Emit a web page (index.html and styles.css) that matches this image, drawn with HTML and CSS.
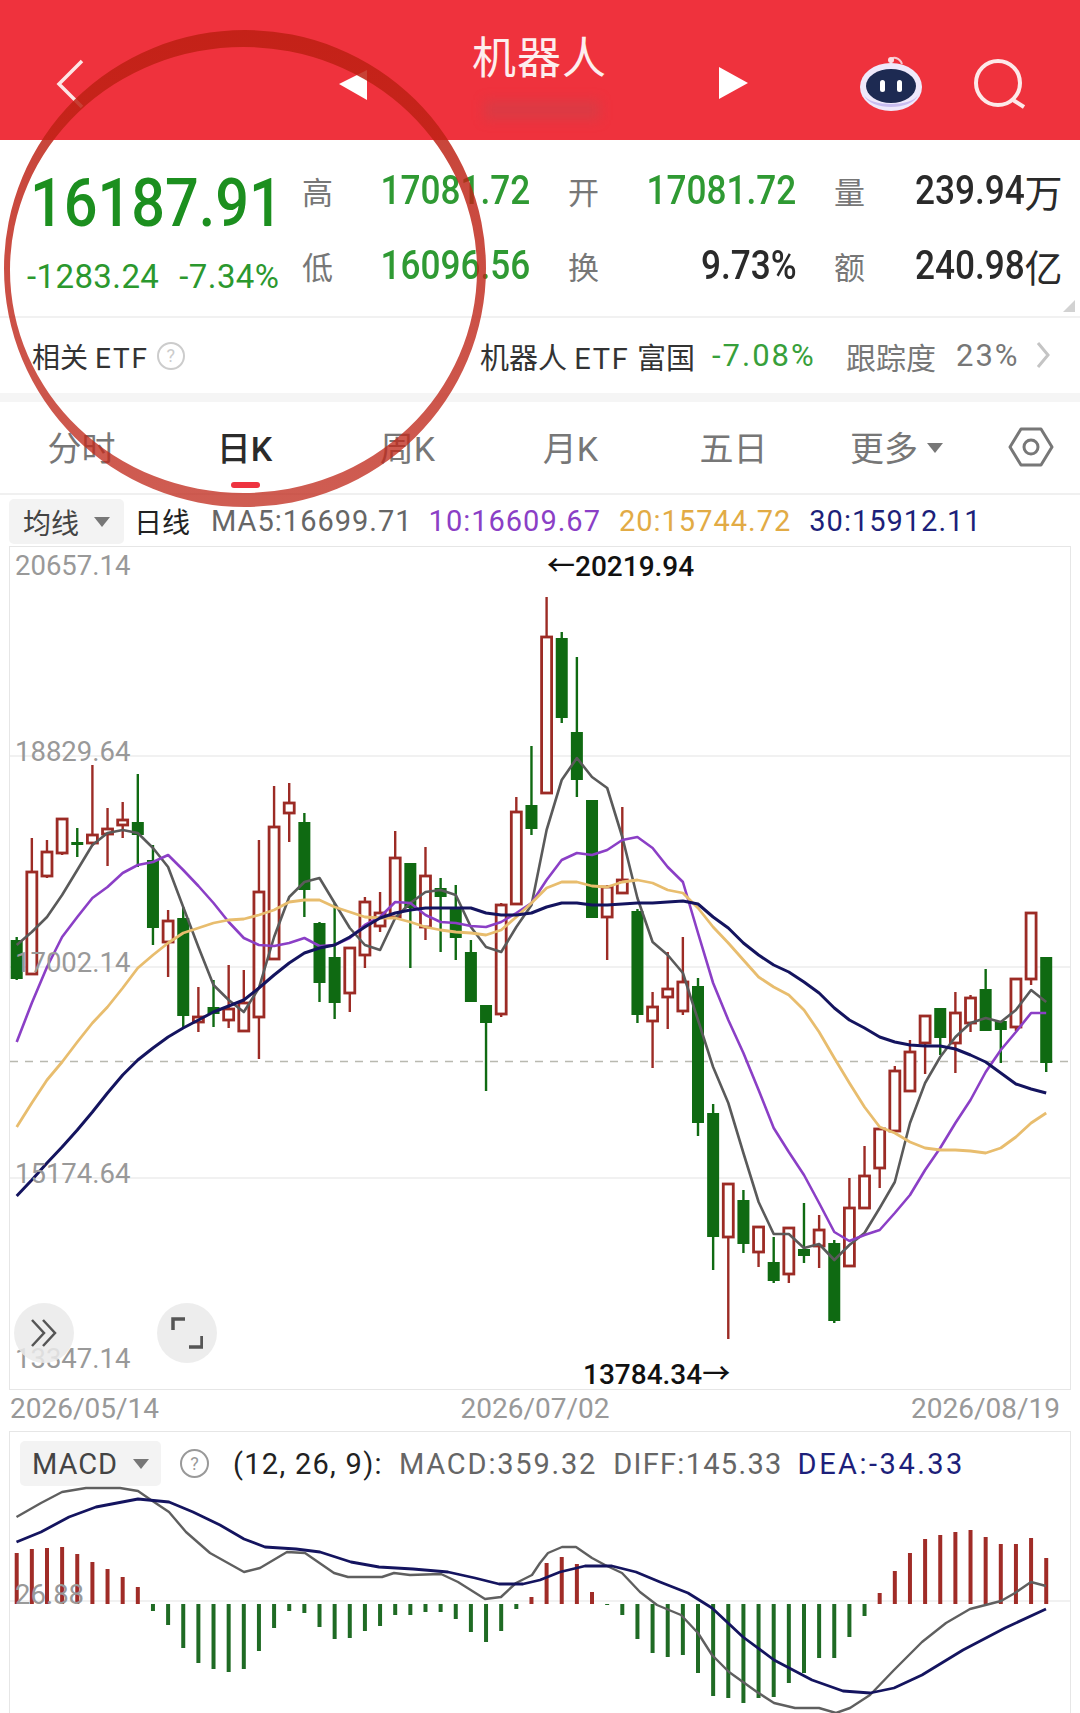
FILE: index.html
```html
<!DOCTYPE html>
<html lang="zh-CN">
<head>
    <meta charset="UTF-8">
    <meta name="viewport" content="width=device-width, initial-scale=1.0">
    <title>机器人</title>
    <link rel="stylesheet" href="styles.css">
</head>
<body>
    <header class="top-bar">
        <svg class="back-btn" width="28" height="50" viewBox="0 0 28 50"><path d="M26 2 L3 25 L26 48" fill="none" stroke="#fde6e6" stroke-width="3.5"/></svg>
        <svg class="prev-btn" width="28" height="30" viewBox="0 0 28 30"><path d="M0 14 L28 0 L28 30 Z" fill="#fff"/></svg>
        <div class="title">机器人</div>
        <svg class="next-btn" width="29" height="32" viewBox="0 0 29 32"><path d="M0 0 L29 16 L0 32 Z" fill="#fff"/></svg>
        <svg class="robot-btn" width="62" height="56" viewBox="0 0 62 56">
            <path d="M31 9 C30 4 33 2 36 3 C39 4 41 6 42 9" fill="none" stroke="#f7c8d0" stroke-width="2"/>
            <circle cx="31" cy="5" r="3" fill="#fbdde2"/>
            <ellipse cx="31" cy="32" rx="31" ry="24" fill="#efe9fb"/>
            <path d="M4 40 C10 52 52 52 58 40 C52 56 10 56 4 40 Z" fill="#c9bdf0"/>
            <ellipse cx="31" cy="31" rx="25" ry="17" fill="#1d2a52"/>
            <rect x="20" y="25" width="5" height="12" rx="2.5" fill="#fff"/>
            <rect x="37" y="25" width="5" height="12" rx="2.5" fill="#fff"/>
        </svg>
        <svg class="search-btn" width="52" height="50" viewBox="0 0 52 50"><circle cx="24" cy="24" r="22" fill="none" stroke="#fde9e9" stroke-width="4"/><path d="M39 41 L50 48" stroke="#fde9e9" stroke-width="4"/></svg>
        <div class="smudge"></div>
    </header>

    <section class="quote">
        <div class="price-col">
            <div class="price">16187.91</div>
            <div class="change"><span>-1283.24</span><span>-7.34%</span></div>
        </div>
        <div class="stats">
            <div class="stat"><span class="stat-label">高</span><span class="stat-value down"><span class="digits">17081.72</span></span></div>
            <div class="stat"><span class="stat-label">开</span><span class="stat-value down"><span class="digits">17081.72</span></span></div>
            <div class="stat"><span class="stat-label">量</span><span class="stat-value"><span class="digits">239.94</span><span class="unit">万</span></span></div>
            <div class="stat"><span class="stat-label">低</span><span class="stat-value down"><span class="digits">16096.56</span></span></div>
            <div class="stat"><span class="stat-label">换</span><span class="stat-value"><span class="digits">9.73%</span></span></div>
            <div class="stat"><span class="stat-label">额</span><span class="stat-value"><span class="digits">240.98</span><span class="unit">亿</span></span></div>
        </div>
        <div class="corner"></div>
    </section>

    <section class="etf-row">
        <span class="etf-title">相关 <b>ETF</b></span>
        <span class="help etf-help">?</span>
        <span class="etf-name">机器人 <b>ETF</b> 富国</span>
        <span class="etf-pct">-7.08%</span>
        <span class="etf-track">跟踪度</span>
        <span class="etf-track-val">23%</span>
        <svg class="etf-arrow" width="15" height="26" viewBox="0 0 15 26"><path d="M2 1 L12 13 L2 25" fill="none" stroke="#c4c4c4" stroke-width="3"/></svg>
    </section>

    <nav class="tabs">
        <div class="tab">分时</div>
        <div class="tab active">日K</div>
        <div class="tab">周K</div>
        <div class="tab">月K</div>
        <div class="tab">五日</div>
        <div class="tab">更多<i class="caret tab-caret"></i></div>
        <div class="tab">
            <svg width="46" height="40" viewBox="0 0 46 40"><path d="M13 2 L33 2 L44 20 L33 38 L13 38 L2 20 Z" fill="none" stroke="#777" stroke-width="3" stroke-linejoin="round"/><circle cx="23" cy="20" r="7" fill="none" stroke="#777" stroke-width="3"/></svg>
        </div>
    </nav>

    <div class="legend">
        <div class="picker ma-picker">均线<i class="caret"></i></div>
        <span class="legend-day">日线</span>
        <span class="ma5">MA5:16699.71</span>
        <span class="ma10">10:16609.67</span>
        <span class="ma20">20:15744.72</span>
        <span class="ma30">30:15912.11</span>
    </div>

    <div class="chart-box">
        <svg id="kline" width="1060" height="842" viewBox="10 547 1060 842"></svg>
        <span class="peak high-peak">←20219.94</span>
        <span class="peak low-peak">13784.34→</span>
        <div class="round-btn skip-btn">
            <svg width="32" height="32" viewBox="0 0 32 32"><path d="M4 3 L16 16 L4 29 M15 3 L27 16 L15 29" fill="none" stroke="#555" stroke-width="2.5"/></svg>
        </div>
        <div class="round-btn expand-btn">
            <svg width="32" height="34" viewBox="0 0 32 34"><path d="M14 3 L2 3 L2 14 M31 20 L31 31 L18 31" fill="none" stroke="#555" stroke-width="3.5"/></svg>
        </div>
    </div>

    <div class="dates">
        <span>2026/05/14</span>
        <span>2026/07/02</span>
        <span>2026/08/19</span>
    </div>

    <div class="macd-box">
        <div class="macd-head">
            <div class="picker macd-picker">MACD<i class="caret"></i></div>
            <span class="help macd-help">?</span>
            <span class="macd-params">(12, 26, 9):</span>
            <span class="macd-val">MACD:359.32</span>
            <span class="diff-val">DIFF:145.33</span>
            <span class="dea-val">DEA:-34.33</span>
        </div>
        <svg id="macd" width="1060" height="227" viewBox="10 1486 1060 227"></svg>
    </div>

    <svg class="ring" width="1080" height="540" viewBox="0 0 1080 540">
        <defs>
            <linearGradient id="ringFill" x1="0" y1="0" x2="0" y2="1">
                <stop offset="0" stop-color="#bd1f12" stop-opacity=".86"/>
                <stop offset="1" stop-color="#c02a1c" stop-opacity=".76"/>
            </linearGradient>
        </defs>
        <path fill="url(#ringFill)" fill-rule="evenodd" d="M4 268.5 A241 238.5 0 1 0 486 268.5 A241 238.5 0 1 0 4 268.5 Z M10 270 A233.5 223 0 1 0 477 270 A233.5 223 0 1 0 10 270 Z"/>
    </svg>

    <script src="chart.js"></script>
</body>
</html>
```

FILE: styles.css
```css
* { box-sizing: border-box; }
html, body { margin: 0; padding: 0; background: #fff; }
body {
    width: 1080px;
    height: 1713px;
    overflow: hidden;
    position: relative;
    display: flex;
    flex-direction: column;
    font-family: Roboto, "Noto Sans CJK SC", sans-serif;
    color: #333;
}
b { font-weight: 400; }

/* top bar */
.top-bar { position: relative; height: 140px; flex: none; background: #ef323d; display: flex; align-items: flex-start; }
.back-btn { margin: 59px 0 0 56px; }
.prev-btn { margin: 70px 0 0 255px; }
.title { margin: 23px 0 0 105px; width: 135px; font-size: 44px; line-height: 64px; color: #fdeeee; letter-spacing: 1px; white-space: nowrap; font-family: "Noto Sans CJK SC", sans-serif; }
.next-btn { margin: 67px 0 0 112px; }
.robot-btn { margin: 55px 0 0 112px; }
.search-btn { margin: 59px 0 0 52px; }
.smudge { position: absolute; left: 484px; top: 100px; width: 116px; height: 20px; background: rgba(190, 70, 80, .38); filter: blur(6px); }

/* quote block */
.quote { position: relative; height: 178px; flex: none; display: flex; border-bottom: 2px solid #f1f1f1; }
.price-col { width: 302px; flex: none; }
.price { font-size: 66px; line-height: 68px; width: 270px; white-space: nowrap; margin: 30px 0 0 30px; color: #1c8f1f; font-weight: 500; transform: scaleX(.9); transform-origin: left center; }
.change { display: flex; gap: 20px; margin: 21px 0 0 27px; font-size: 33px; line-height: 36px; color: #2b982e; white-space: nowrap; letter-spacing: .4px; }
.stats { display: grid; grid-template-columns: repeat(3, 228.5px); column-gap: 37.5px; grid-auto-rows: 75px; padding-top: 13px; }
.stat { display: flex; justify-content: space-between; align-items: center; }
.stat-label { font-family: "Noto Sans CJK SC", sans-serif; font-size: 31px; color: #777; }
.stat-value { display: flex; align-items: center; font-size: 40px; font-weight: 500; color: #2a2a2a; }
.stat-value.down { color: #2f9a33; }
.digits { display: inline-block; transform: scaleX(.88); transform-origin: right center; }
.unit { font-family: "Noto Sans CJK SC", sans-serif; font-size: 38px; font-weight: 400; }
.corner { position: absolute; left: 1063px; top: 160px; width: 12px; height: 12px; background: #d2d2d2; clip-path: polygon(100% 0, 100% 100%, 0 100%); }

/* etf row */
.etf-row { position: relative; height: 84px; flex: none; border-bottom: 9px solid #f5f5f5; display: flex; align-items: center; font-size: 28px; white-space: nowrap; }
.etf-row b { letter-spacing: 1.8px; }
.etf-title { margin-left: 32px; color: #333; }
.etf-name { position: absolute; left: 480px; color: #333; font-size: 29px; }
.etf-pct { position: absolute; left: 712px; color: #37a03b; font-size: 31px; letter-spacing: 2px; }
.etf-track { position: absolute; left: 846px; color: #777; font-family: "Noto Sans CJK SC", sans-serif; font-size: 30px; }
.etf-track-val { position: absolute; left: 956px; color: #777; font-size: 31px; letter-spacing: 2px; }
.etf-arrow { position: absolute; left: 1036px; top: 24px; }
.help { display: inline-flex; align-items: center; justify-content: center; border-radius: 50%; border: 2px solid #ccc; color: #ccc; font-size: 18px; width: 28px; height: 28px; }
.etf-help { margin-left: 8px; }

/* period tabs */
.tabs { flex: none; height: 93px; display: grid; grid-template-columns: repeat(6, 163px) 102px; align-items: center; border-bottom: 2px solid #f0f0f0; }
.tab { position: relative; text-align: center; font-size: 34px; color: #777; padding-bottom: 2px; white-space: nowrap; }
.tab svg { display: block; margin: 0 auto 0 30px; }
.tab.active { color: #2b2b2b; font-weight: 500; }
.tab.active::after { content: ""; position: absolute; left: 68px; top: 60px; width: 29px; height: 6px; border-radius: 3px; background: #ee3340; }
.caret { display: inline-block; width: 0; height: 0; margin-left: 15px; vertical-align: middle; border-left: 8px solid transparent; border-right: 8px solid transparent; border-top: 10px solid #777; }
.tab-caret { margin-left: 9px; margin-top: -8px; }

/* moving average legend */
.legend { flex: none; height: 51px; display: flex; align-items: center; font-size: 29px; white-space: nowrap; letter-spacing: 1px; }
.picker { display: flex; align-items: center; justify-content: center; background: #f3f3f3; border-radius: 5px; height: 45px; font-size: 28px; color: #444; letter-spacing: 0; }
.ma-picker { width: 115px; margin: 2px 0 0 9px; }
.legend-day { margin-left: 10px; color: #222; letter-spacing: 0; font-size: 28px; }
.ma5 { margin-left: 21px; color: #666; }
.ma10 { margin-left: 16px; color: #8b3fc6; }
.ma20 { margin-left: 18px; color: #e2ab45; }
.ma30 { margin-left: 18px; color: #1d1f7a; }

/* main chart */
.chart-box { position: relative; flex: none; width: 1062px; height: 844px; margin-left: 9px; border: 1px solid #e6e6e6; }
.chart-box svg { display: block; }
.axis-label { font-family: Roboto, sans-serif; font-size: 27.5px; fill: #999; }
.peak { position: absolute; font-family: Roboto, "Noto Sans CJK SC", sans-serif; font-size: 28px; line-height: 28px; font-weight: 500; color: #111; white-space: nowrap; }
.high-peak { left: 537px; top: 6px; }
.low-peak { left: 573px; top: 814px; }
.round-btn { position: absolute; top: 756px; width: 60px; height: 60px; border-radius: 50%; background: rgba(234, 234, 234, .85); display: flex; align-items: center; justify-content: center; }
.skip-btn { left: 4px; }
.expand-btn { left: 147px; }

.dates { flex: none; height: 41px; display: flex; justify-content: space-between; align-items: center; padding: 0 20px 4px 10px; font-size: 28px; color: #999; }

/* macd panel */
.macd-box { flex: 1; margin-left: 9px; width: 1062px; border: 1px solid #e6e6e6; border-bottom: 0; position: relative; overflow: hidden; }
.macd-box svg { display: block; }
.macd-head { height: 54px; padding-top: 9px; display: flex; align-items: center; font-size: 29px; white-space: nowrap; }
.macd-picker { width: 141px; margin-left: 10px; color: #444; font-size: 29px; letter-spacing: 1px; }
.macd-help { margin-left: 19px; width: 29px; height: 29px; border-color: #999; color: #999; }
.macd-params { margin-left: 24px; color: #222; letter-spacing: 1.3px; }
.macd-val { margin-left: 16px; color: #666; letter-spacing: 1.8px; }
.diff-val { margin-left: 16px; color: #666; letter-spacing: 1.3px; }
.dea-val { margin-left: 15px; color: #1d1f7a; letter-spacing: 2.5px; }

/* hand drawn circle on top of the screenshot */
.ring { position: absolute; left: 0; top: 0; pointer-events: none; }
```

FILE: chart.js
```js
const UP = '#9c2b25';
const DOWN = '#0f6a12';
const firstX = 16.7;
const stepX = 15.14;

// type, wick top, body top, body bottom, wick bottom
const candles = [
    ['g',937,940,979,980], ['r',838,872,974,974], ['r',840,852,876,878], ['r',819,819,853,855],
    ['g',828,842,845,857], ['r',765,835,843,846], ['r',808,829,834,866], ['r',802,820,825,838],
    ['g',774,822,835,867], ['g',845,860,928,945], ['r',910,921,942,977], ['g',907,918,1016,1027],
    ['r',987,1017,1022,1032], ['g',980,1007,1014,1027], ['r',965,1009,1020,1028], ['r',970,1003,1031,1031],
    ['r',840,892,1017,1059], ['r',786,827,959,959], ['r',783,803,813,842], ['g',813,822,890,917],
    ['g',922,923,983,1002], ['g',903,957,1003,1019], ['r',948,948,993,1012], ['r',897,902,955,968],
    ['r',892,913,926,932], ['r',831,858,917,917], ['g',863,863,908,968], ['r',847,876,927,940],
    ['g',878,888,897,952], ['g',885,907,938,960], ['g',940,952,1002,1002], ['g',1005,1005,1023,1091],
    ['r',903,905,1014,1017], ['r',797,812,904,904], ['g',746,805,829,835], ['r',597,637,793,794],
    ['g',632,638,718,723], ['g',657,732,780,797], ['g',800,800,918,918], ['r',885,887,917,960],
    ['r',807,880,893,893], ['g',909,911,1015,1023], ['r',992,1007,1021,1068], ['r',952,989,997,1029],
    ['r',937,982,1011,1015], ['g',978,986,1123,1136], ['g',1104,1113,1237,1270], ['r',1184,1184,1237,1339],
    ['g',1190,1200,1244,1253], ['r',1227,1227,1252,1267], ['g',1237,1262,1281,1283], ['r',1228,1228,1274,1283],
    ['g',1203,1249,1256,1263], ['r',1215,1230,1246,1268], ['g',1240,1243,1321,1323], ['r',1178,1208,1266,1266],
    ['r',1146,1176,1208,1208], ['r',1129,1129,1168,1188], ['r',1066,1071,1131,1131], ['r',1040,1052,1091,1091],
    ['r',1016,1016,1043,1074], ['g',1008,1008,1038,1055], ['r',992,1013,1043,1073], ['r',995,998,1023,1032],
    ['g',969,989,1031,1031], ['g',1021,1021,1030,1063], ['r',979,979,1027,1031], ['r',913,913,979,985],
    ['g',957,957,1063,1072]
];

const ma5 = [945,932,917,895,870,845,833,830,833,848,867,907,947,985,1000,1012,988,937,897,882,878,903,928,945,950,918,903,892,890,895,927,947,952,927,905,830,780,758,777,788,837,898,942,955,973,1020,1067,1103,1153,1202,1234,1234,1248,1244,1260,1245,1233,1208,1182,1123,1083,1057,1037,1023,1018,1022,1010,990,1002];
const ma10 = [1042,1003,967,937,917,898,887,873,865,862,855,870,886,903,922,938,945,946,943,938,946,945,938,925,917,902,903,915,922,923,926,927,922,913,903,880,860,853,855,850,840,837,848,867,882,933,983,1020,1053,1090,1128,1152,1175,1203,1232,1241,1235,1230,1213,1195,1170,1148,1123,1100,1072,1050,1032,1013,1013];
const ma20 = [1127,1103,1080,1062,1042,1023,1007,988,968,955,943,933,928,923,920,919,915,910,902,900,900,907,912,917,918,918,922,927,930,932,933,935,930,917,903,888,882,882,886,887,882,880,883,890,893,908,927,943,960,977,987,995,1010,1032,1058,1083,1107,1127,1133,1142,1148,1150,1150,1151,1153,1148,1137,1123,1113];
const ma30 = [1196,1180,1163,1147,1130,1112,1093,1075,1060,1048,1037,1028,1020,1012,1006,1000,988,975,963,953,948,945,937,927,918,913,910,908,908,908,908,913,915,915,913,907,903,903,905,905,904,903,903,902,901,904,917,928,943,955,965,972,982,993,1008,1020,1028,1037,1042,1045,1046,1046,1049,1055,1062,1073,1084,1089,1093];

const bars = [51,55,56,57,50,42,35,27,17,-7,-21,-44,-59,-65,-68,-65,-47,-24,-7,-9,-23,-35,-34,-27,-22,-11,-11,-8,-8,-15,-28,-38,-27,-5,7,41,47,40,12,-1,-11,-35,-49,-53,-51,-69,-92,-94,-99,-94,-93,-79,-69,-54,-54,-33,-12,11,33,51,65,69,72,74,67,60,60,66,46];

const diffLine = '16.5,1517 41,1503 62,1492 86,1488 120,1488 138,1491 151,1500 169,1512 186,1532 210,1553 244,1572 260,1568 287,1552 305,1553 334,1573 348,1577 382,1577 394,1573 410,1575 441,1574 458,1582 485,1599 501,1597 516,1583 532,1575 540,1563 548,1553 562,1547 576,1547 592,1558 605,1565 622,1573 640,1592 657,1605 681,1615 698,1633 712,1655 729,1672 757,1692 774,1703 795,1708 819,1708 836,1713 850,1708 870,1695 894,1670 922,1642 946,1623 970,1609 1001,1601 1015,1593 1031,1582 1046,1586';
const deaLine = '16.5,1542 41,1532 69,1517 96,1507 138,1499 169,1502 193,1512 220,1525 244,1539 265,1547 296,1549 320,1552 351,1562 379,1567 413,1569 448,1572 475,1578 499,1584 523,1584 540,1580 560,1572 585,1566 612,1566 636,1572 660,1582 688,1593 712,1608 743,1637 774,1660 812,1680 843,1691 870,1693 894,1688 922,1675 963,1650 1005,1628 1046,1609';

function xAt(i) {
    return firstX + i * stepX;
}

function line(x1, y1, x2, y2, color, width) {
    return `<line x1="${x1}" y1="${y1}" x2="${x2}" y2="${y2}" stroke="${color}" stroke-width="${width}"/>`;
}

function poly(points, color, width) {
    return `<polyline points="${points}" fill="none" stroke="${color}" stroke-width="${width}" stroke-linejoin="round"/>`;
}

function maLine(values, color, width) {
    return poly(values.map((y, i) => `${xAt(i).toFixed(1)},${y}`).join(' '), color, width);
}

function drawCandle(c, i) {
    const x = xAt(i);
    const [type, wickTop, top, bottom, wickBottom] = c;
    const color = type === 'r' ? UP : DOWN;
    let out = line(x, wickTop, x, top, color, 2.4) + line(x, bottom, x, wickBottom, color, 2.4);
    if (type === 'r') {
        out += `<rect x="${x - 5}" y="${top}" width="10" height="${bottom - top}" fill="#fff" stroke="${color}" stroke-width="2.8"/>`;
    } else {
        out += `<rect x="${x - 6}" y="${top}" width="12" height="${bottom - top}" fill="${color}"/>`;
    }
    return out;
}

function drawKline() {
    let out = '';
    [756, 967, 1178].forEach(y => { out += line(10, y, 1070, y, '#ececec', 1.5); });
    out += '<line x1="10" y1="1061.5" x2="1070" y2="1061.5" stroke="#b9b9b0" stroke-width="1.5" stroke-dasharray="8 7"/>';
    out += candles.map(drawCandle).join('');
    out += maLine(ma5, '#5a5a5a', 2.6);
    out += maLine(ma10, '#8b3fc6', 2.6);
    out += maLine(ma20, '#e8bd6e', 2.8);
    out += maLine(ma30, '#14145f', 3);
    [['20657.14', 575], ['18829.64', 761], ['17002.14', 972], ['15174.64', 1183], ['13347.14', 1368]].forEach(a => {
        out += `<text class="axis-label" x="15" y="${a[1]}">${a[0]}</text>`;
    });
    document.getElementById('kline').innerHTML = out;
}

function drawMacd() {
    const zero = 1604;
    let out = line(10, 1601, 1070, 1601, '#ececec', 1.5);
    bars.forEach((h, i) => {
        const x = xAt(i);
        out += line(x, zero, x, zero - h, h > 0 ? '#a02c27' : '#1f6b24', 4);
    });
    out += poly(diffLine, '#5f5f5f', 2.4);
    out += poly(deaLine, '#14145f', 2.8);
    out += '<text class="axis-label" x="15" y="1604">26.88</text>';
    document.getElementById('macd').innerHTML = out;
}

drawKline();
drawMacd();
```
